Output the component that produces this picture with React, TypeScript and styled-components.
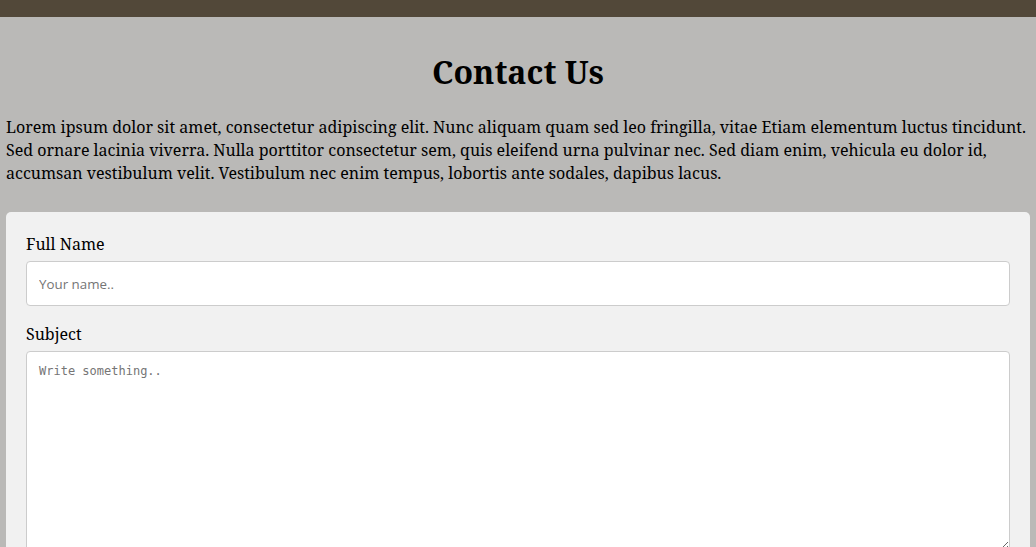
import React from "react";
import styled, { createGlobalStyle } from "styled-components";

const Global = createGlobalStyle`
  html, body { margin: 0; padding: 0; }
  body {
    background: #bab9b7;
    font-family: "Noto Serif", "DejaVu Serif", serif;
    color: #000;
  }
`;

const TopBar = styled.div`
  height: 17px;
  background: #524839;
`;

const Main = styled.main`
  padding: 0 6px;
`;

const Title = styled.h1`
  margin: 33px 0 22px;
  text-align: center;
  font-size: 32px;
  line-height: 44px;
  font-weight: 700;
`;

const Intro = styled.p`
  margin: 0 0 27px;
  font-size: 16px;
  line-height: 23px;
`;

const Card = styled.form`
  background: #f1f1f1;
  border-radius: 5px;
  padding: 20px 20px 0;
  height: 400px;
`;

const Label = styled.label`
  display: block;
  font-size: 16px;
  line-height: 24px;
  margin-bottom: 5px;
`;

const Input = styled.input`
  display: block;
  box-sizing: border-box;
  width: 100%;
  height: 45px;
  padding: 12px;
  border: 1px solid #ccc;
  border-radius: 4px;
  background: #fff;
  font-family: "Open Sans", "Noto Sans", sans-serif;
  font-size: 13.333px;
  margin: 0 0 16px;
  &::placeholder { color: #757575; }
`;

const TextArea = styled.textarea`
  display: block;
  box-sizing: border-box;
  width: 100%;
  height: 200px;
  padding: 12px;
  border: 1px solid #ccc;
  border-radius: 4px;
  background: #fff;
  font-family: "DejaVu Sans Mono", monospace;
  font-size: 12px;
  resize: vertical;
  &::placeholder { color: #757575; }
`;

export default function App() {
  return (
    <>
      <Global />
      <TopBar />
      <Main>
        <Title>Contact Us</Title>
        <Intro>
          Lorem ipsum dolor sit amet, consectetur adipiscing elit. Nunc aliquam quam sed leo fringilla, vitae Etiam elementum luctus tincidunt. Sed ornare lacinia viverra. Nulla porttitor consectetur sem, quis eleifend urna pulvinar nec. Sed diam enim, vehicula eu dolor id, accumsan vestibulum velit. Vestibulum nec enim tempus, lobortis ante sodales, dapibus lacus.
        </Intro>
        <Card>
          <Label htmlFor="name">Full Name</Label>
          <Input id="name" type="text" placeholder="Your name.." />
          <Label htmlFor="subject">Subject</Label>
          <TextArea id="subject" placeholder="Write something.." />
        </Card>
      </Main>
    </>
  );
}
